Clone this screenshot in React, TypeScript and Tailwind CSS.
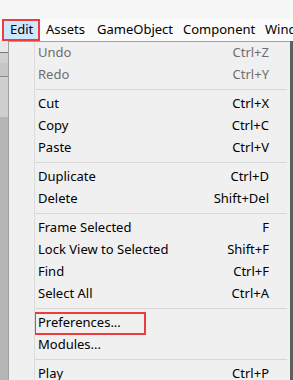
import React from "react";

type Item = { label: string; shortcut?: string; disabled?: boolean; boxed?: boolean } | "sep";

const items: Item[] = [
  { label: "Undo", shortcut: "Ctrl+Z", disabled: true },
  { label: "Redo", shortcut: "Ctrl+Y", disabled: true },
  "sep",
  { label: "Cut", shortcut: "Ctrl+X" },
  { label: "Copy", shortcut: "Ctrl+C" },
  { label: "Paste", shortcut: "Ctrl+V" },
  "sep",
  { label: "Duplicate", shortcut: "Ctrl+D" },
  { label: "Delete", shortcut: "Shift+Del" },
  "sep",
  { label: "Frame Selected", shortcut: "F" },
  { label: "Lock View to Selected", shortcut: "Shift+F" },
  { label: "Find", shortcut: "Ctrl+F" },
  { label: "Select All", shortcut: "Ctrl+A" },
  "sep",
  { label: "Preferences...", boxed: true },
  { label: "Modules..." },
  "sep",
  { label: "Play", shortcut: "Ctrl+P" },
];

export default function App() {
  return (
    <div
      className="w-[293px] h-[380px] overflow-hidden bg-[#f7f7f7] text-[13px] text-black flex flex-col"
      style={{ fontFamily: '"Noto Sans", "Noto Sans CJK SC", sans-serif' }}
    >
      <div className="h-[19px] bg-[#f7f7f7] shrink-0" />
      <div className="h-[22px] bg-[#fbfbfb] flex items-center shrink-0 whitespace-nowrap overflow-hidden">
        <div className="ml-[2px] h-[22px] w-[38px] shrink-0 border-2 border-[#ee3b3b] bg-[#cce8ff] flex items-center pl-[6px]">
          Edit
        </div>
        <div className="ml-[6px] w-[51px] shrink-0">Assets</div>
        <div className="w-[86px] shrink-0">GameObject</div>
        <div className="w-[82px] shrink-0">Component</div>
        <div className="shrink-0">Wind</div>
      </div>
      <div className="flex flex-1 min-h-0">
        <div className="w-[8px] bg-[#a3a3a3] flex flex-col shrink-0">
          <div className="h-[12px] bg-[#e8e8e8] border-b border-[#777]" />
          <div className="h-[10px] bg-[#d0d0d0]" />
          <div className="h-[14px] bg-[#c6c6c6] border-b border-[#888]" />
          <div className="h-[40px] bg-[#cfcfcf]" />
          <div className="flex-1 bg-[#b5b5b5]" />
        </div>
        <div className="w-[282px] bg-[#f0f0f0] border-l border-t border-[#a0a0a0] flex flex-col relative shrink-0 overflow-hidden">
          <div className="absolute left-[25px] top-0 bottom-0 w-px bg-[#dcdcdc]" />
          {items.map((it, i) =>
            it === "sep" ? (
              <div key={i} className="h-[7px] shrink-0 flex items-center pl-[26px] pr-[3px]">
                <div className="h-px w-full bg-[#d7d7d7]" />
              </div>
            ) : (
              <div
                key={i}
                className={`h-[22px] shrink-0 flex items-center pl-[29px] pr-[21px] whitespace-nowrap ${
                  it.disabled ? "text-[#6d6d6d]" : "text-black"
                }`}
              >
                {it.boxed ? (
                  <span className="-ml-[4px] h-[23px] w-[112px] border-2 border-[#ee3b3b] flex items-center pl-[2px]">
                    {it.label}
                  </span>
                ) : (
                  <span>{it.label}</span>
                )}
                <span className="ml-auto">{it.shortcut ?? ""}</span>
              </div>
            )
          )}
        </div>
        <div className="flex-1 bg-[#5e5e5e]" />
      </div>
    </div>
  );
}
